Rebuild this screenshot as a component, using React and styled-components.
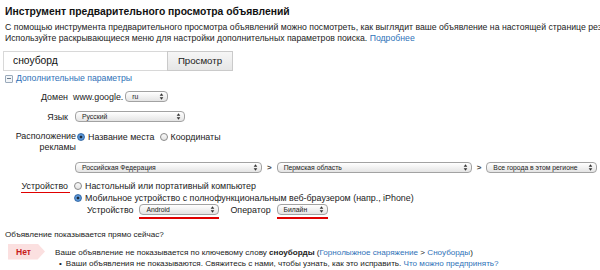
import React from "react";
import styled, { createGlobalStyle } from "styled-components";

const Global = createGlobalStyle`
  html, body { margin: 0; padding: 0; background: #fff; }
  body { font-family: "Liberation Sans", Arial, sans-serif; color: #222; }
`;

const Page = styled.div`
  width: 600px;
  height: 270px;
  overflow: hidden;
  padding: 4px 0 0 5px;
  box-sizing: border-box;
`;

const Title = styled.h1`
  margin: 0;
  font-size: 10.35px;
  font-weight: bold;
  line-height: 16px;
  color: #111;
  white-space: nowrap;
`;

const Desc = styled.p`
  margin: 2px 0 0;
  font-size: 8.7px;
  line-height: 11px;
  white-space: nowrap;
  color: #222;
`;

const Link = styled.a`
  color: #2f72b8;
  text-decoration: none;
`;

const SearchRow = styled.div`
  display: flex;
  margin: 6.5px 0 0 -2px;
  height: 20px;
`;

const Input = styled.div`
  width: 164px;
  box-sizing: border-box;
  border: 1px solid #d8d8d8;
  border-right: none;
  padding: 0 9px;
  font-size: 10.3px;
  line-height: 18px;
  color: #111;
`;

const Button = styled.div`
  width: 66px;
  box-sizing: border-box;
  border: 1px solid #cacaca;
  background: linear-gradient(#f6f6f6, #e6e6e6);
  font-size: 9.7px;
  line-height: 18px;
  text-align: center;
  color: #222;
`;

const Toggle = styled.div`
  display: flex;
  align-items: center;
  gap: 3px;
  margin-top: 2.5px;
  font-size: 8.7px;
  line-height: 11px;
  color: #2f72b8;
`;

const MinusBox = styled.span`
  width: 6px;
  height: 6px;
  border: 1px solid #9aaabb;
  border-radius: 1px;
  position: relative;
  background: #f2f5f8;
  &::after {
    content: "";
    position: absolute;
    left: 1px;
    right: 1px;
    top: 2.5px;
    height: 1px;
    background: #6a7a8a;
  }
`;

const Form = styled.div`
  display: grid;
  grid-template-columns: 63px 1fr;
  column-gap: 5px;
  margin-top: 6.5px;
  font-size: 8.9px;
  line-height: 12px;
`;

const Label = styled.div`
  text-align: right;
  white-space: nowrap;
  margin-top: ${(p) => p.$mt || 0}px;
`;

const WideLabel = styled.div`
  text-align: right;
  margin-top: ${(p) => p.$mt || 0}px;
  margin-right: -8px;
  line-height: 11px;
`;

const Cell = styled.div`
  display: flex;
  align-items: center;
  gap: ${(p) => p.$gap ?? 4}px;
  height: ${(p) => (p.$h ? `${p.$h}px` : "auto")};
  margin-top: ${(p) => p.$mt || 0}px;
  margin-left: ${(p) => p.$ml || 0}px;
  white-space: nowrap;
`;

const Stack = styled.div`
  display: flex;
  flex-direction: column;
  margin-top: ${(p) => p.$mt || 0}px;
`;

const SelectBox = styled.div`
  display: flex;
  align-items: center;
  width: ${(p) => p.$w}px;
  height: 11px;
  box-sizing: border-box;
  border: 1px solid #a2a2a2;
  border-radius: 4px;
  background: linear-gradient(#ffffff, #e4e4e4);
  font-size: 6.8px;
  color: #222;
  padding-left: 6px;
  white-space: nowrap;
  overflow: hidden;
  flex: none;
`;

const SelectText = styled.span`
  flex: 1;
`;

const Arrows = styled.svg`
  width: 7px;
  height: 9px;
  flex: none;
  margin-right: 2px;
`;

const Select = ({ w, children }) => (
  <SelectBox $w={w}>
    <SelectText>{children}</SelectText>
    <Arrows viewBox="0 0 7 9">
      <path d="M3.5 1.2 L5.3 3.7 L1.7 3.7 Z M3.5 7.8 L5.3 5.3 L1.7 5.3 Z" fill="#333" />
    </Arrows>
  </SelectBox>
);

const Radio = styled.span`
  width: 8px;
  height: 8px;
  box-sizing: border-box;
  border-radius: 50%;
  flex: none;
  border: 1px solid ${(p) => (p.$on ? "#3a6ea8" : "#8a8a8a")};
  background: ${(p) =>
    p.$on
      ? "radial-gradient(circle, #1b2a3a 0 1.3px, #6aa6e6 1.7px, #2d6fc0 100%)"
      : "linear-gradient(#fafafa, #e2e2e2)"};
`;

const Gt = styled.span`
  font-size: 8px;
  font-weight: bold;
  color: #444;
  margin: 0 1px;
`;

const LabelMark = styled.span`
  display: inline-block;
  padding: 0 2px 0 1px;
  margin-right: -2px;
  border-bottom: 1.5px solid #e00000;
  line-height: 11px;
`;

const SelectMark = styled.div`
  display: flex;
  flex: none;
  padding-bottom: 1.5px;
  margin-bottom: -3.5px;
  border-bottom: 2px solid #e00000;
`;

const Question = styled.div`
  margin-top: 13.5px;
  font-size: 8.1px;
  line-height: 11px;
`;

const Result = styled.div`
  display: flex;
  margin-top: 3.5px;
  margin-left: 3px;
  gap: 10px;
`;

const Badge = styled.div`
  width: 37px;
  height: 16px;
  flex: none;
  background: #fbe0e0;
  clip-path: polygon(0 0, 80% 0, 100% 50%, 80% 100%, 0 100%);
  color: #c81a1a;
  font-weight: bold;
  font-size: 8.5px;
  line-height: 16px;
  padding-left: 8px;
  box-sizing: border-box;
`;

const ResultText = styled.div`
  font-size: 8.1px;
  line-height: 11px;
  padding-top: 3.5px;
  white-space: nowrap;
`;

const Bullet = styled.div`
  padding-left: 4px;
  &::before {
    content: "•";
    margin-right: 4px;
  }
`;

export default function App() {
  return (
    <>
      <Global />
      <Page>
        <Title>Инструмент предварительного просмотра объявлений</Title>
        <Desc>
          С помощью инструмента предварительного просмотра объявлений можно посмотреть, как выглядит ваше объявление на настоящей странице результатов
          <br />
          Используйте раскрывающиеся меню для настройки дополнительных параметров поиска. <Link>Подробнее</Link>
        </Desc>
        <SearchRow>
          <Input>сноуборд</Input>
          <Button>Просмотр</Button>
        </SearchRow>
        <Toggle>
          <MinusBox />
          Дополнительные параметры
        </Toggle>
        <Form>
          <Label>Домен</Label>
          <Cell $gap={2} $h={12}>
            www.google. <Select w={43}>ru</Select>
          </Cell>

          <Label $mt={8}>Язык</Label>
          <Cell $mt={8} $ml={2} $h={12}>
            <Select w={110}>Русский</Select>
          </Cell>

          <WideLabel $mt={8.5}>
            Расположение
            <br />
            рекламы
          </WideLabel>
          <Cell $mt={8.5} $ml={4} $gap={5} $h={11}>
            <Cell $gap={3}>
              <Radio $on /> Название места
            </Cell>
            <Cell $gap={3}>
              <Radio /> Координаты
            </Cell>
          </Cell>

          <div />
          <Cell $mt={9} $ml={2} $gap={4} $h={11}>
            <Select w={187}>Российская Федерация</Select>
            <Gt>&gt;</Gt>
            <Select w={195}>Пермская область</Select>
            <Gt>&gt;</Gt>
            <Select w={111}>Все города в этом регионе</Select>
          </Cell>

          <Label $mt={6.5}>
            <LabelMark>Устройство</LabelMark>
          </Label>
          <Stack $mt={6.5}>
            <Cell $gap={3} $ml={1} $h={12}>
              <Radio /> Настольный или портативный компьютер
            </Cell>
            <Cell $gap={3} $ml={1} $h={12}>
              <Radio $on /> Мобильное устройство с полнофункциональным веб-браузером (напр., iPhone)
            </Cell>
            <Cell $ml={14} $gap={6} $h={12}>
              Устройство
              <SelectMark>
                <Select w={80}>Android</Select>
              </SelectMark>
              <span style={{ marginLeft: 5 }}>Оператор</span>
              <SelectMark>
                <Select w={51}>Билайн</Select>
              </SelectMark>
            </Cell>
          </Stack>
        </Form>
        <Question>Объявление показывается прямо сейчас?</Question>
        <Result>
          <Badge>Нет</Badge>
          <ResultText>
            Ваше объявление не показывается по ключевому слову <b>сноуборды</b> (
            <Link>Горнолыжное снаряжение</Link> &gt; <Link>Сноуборды</Link>)
            <Bullet>
              Ваши объявления не показываются. Свяжитесь с нами, чтобы узнать, как это исправить. <Link>Что можно предпринять?</Link>
            </Bullet>
          </ResultText>
        </Result>
      </Page>
    </>
  );
}
